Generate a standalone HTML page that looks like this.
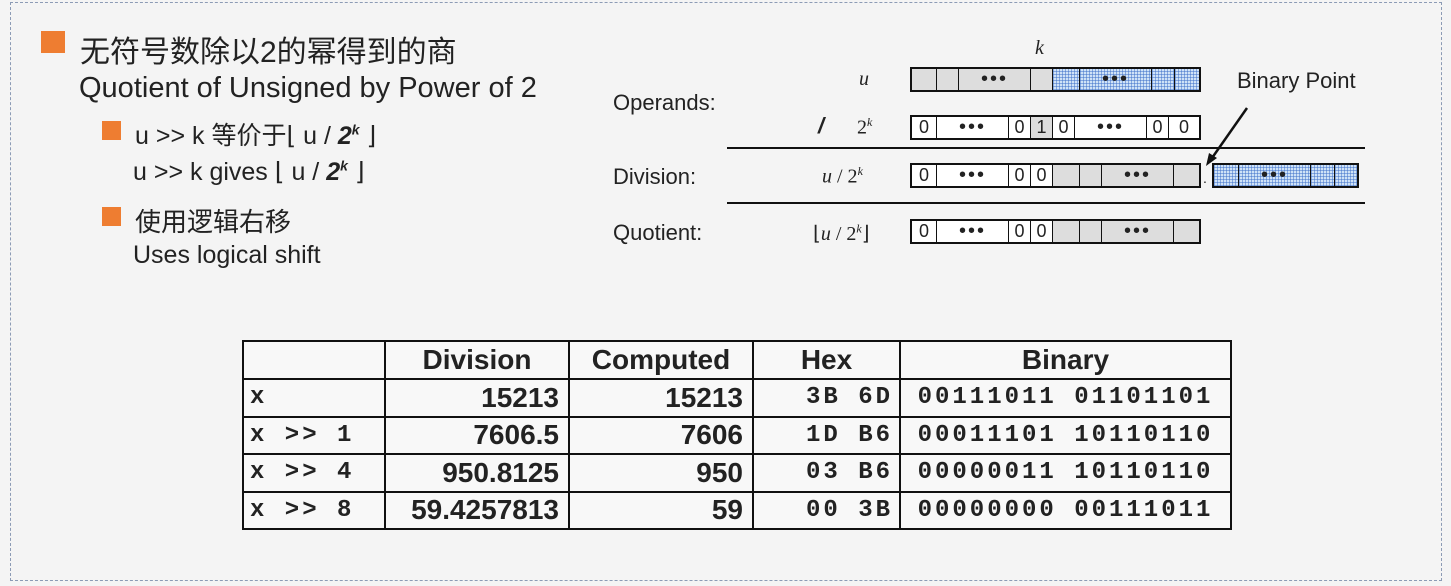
<!DOCTYPE html>
<html><head><meta charset="utf-8"><style>
*{margin:0;padding:0;box-sizing:border-box}
body{width:1451px;height:586px;background:#f4f4f4;position:relative;overflow:hidden;font-family:"Liberation Sans","Noto Sans CJK SC",sans-serif;color:#222}
.frame{position:absolute;left:10px;top:2px;width:1432px;height:579px;border:1.5px dashed #8c9bb5}
.t{position:absolute;white-space:nowrap}
.sq{position:absolute;background:#ee7d31}
.ar{font-family:"Liberation Sans",Arial,sans-serif}
.it{font-family:"Liberation Serif",serif;font-style:italic}
.bar{position:absolute;height:25px;border:2px solid #111;display:flex;background:#ddd}
.bar div{border-right:1.5px solid #111;height:100%;font:18px "Liberation Sans",sans-serif;text-align:center;line-height:21px}
.bar div:last-child{border-right:none}
.w{background:#fff}.g{background:#ddd}
.b{background-color:#cfe2f7;background-image:linear-gradient(90deg,rgba(60,110,200,.5) 1px,transparent 1px),linear-gradient(0deg,rgba(60,110,200,.5) 1px,transparent 1px);background-size:3px 3px}
.dots{font-weight:bold;letter-spacing:2px;font-size:20px!important}
.hl{position:absolute;height:2px;background:#111;left:727px;width:638px}
table{position:absolute;left:242px;top:340px;border-collapse:collapse;font-family:"Liberation Sans",sans-serif;font-weight:bold}
td{border:2.5px solid #111;height:37.5px;background:#f8f8f8;font-size:28px;padding:0 9px;text-align:right;white-space:nowrap}
tr:first-child td{text-align:center;height:38px}
.m{font-family:"Liberation Mono",monospace;font-size:24px;letter-spacing:3px;text-align:left;padding:0 6px}
</style></head><body>
<div class="frame"></div>
<div class="sq" style="left:41px;top:31px;width:24px;height:22px"></div>
<div class="t" style="left:80px;top:27px;font-size:30px">无符号数除以2的幂得到的商</div>
<div class="t" style="left:79px;top:72px;font-size:29px">Quotient of Unsigned by Power of 2</div>
<div class="sq" style="left:102px;top:121px;width:19px;height:19px"></div>
<div class="t" style="left:135px;top:116px;font-size:25px">u &gt;&gt; k 等价于⌊ u / <b><i>2<sup style="font-size:14px">k</sup></i></b> ⌋</div>
<div class="t" style="left:133px;top:157px;font-size:25px">u &gt;&gt; k gives ⌊ u / <b><i>2<sup style="font-size:14px">k</sup></i></b> ⌋</div>
<div class="sq" style="left:102px;top:207px;width:19px;height:19px"></div>
<div class="t" style="left:135px;top:202px;font-size:26px">使用逻辑右移</div>
<div class="t" style="left:133px;top:241px;font-size:25px">Uses logical shift</div>

<div class="t ar" style="left:613px;top:90px;font-size:22px">Operands:</div>
<div class="t ar" style="left:613px;top:164px;font-size:22px">Division:</div>
<div class="t ar" style="left:613px;top:220px;font-size:22px">Quotient:</div>
<div class="t ar" style="left:1237px;top:68px;font-size:22px">Binary Point</div>
<div class="t it" style="left:1035px;top:37px;font-size:20px">k</div>
<div class="t it" style="left:859px;top:68px;font-size:20px">u</div>
<div class="t" style="left:818px;top:113px;font-size:22px;font-weight:bold;font-style:italic">/</div>
<div class="t" style="left:857px;top:115px;font-size:20px;font-family:'Liberation Serif',serif">2<sup style="font-size:12px" class="it">k</sup></div>
<div class="t" style="left:822px;top:164px;font-size:20px;font-family:'Liberation Serif',serif"><i>u</i> / 2<sup style="font-size:12px" class="it">k</sup></div>
<div class="t" style="left:813px;top:221px;font-size:20px;font-family:'Liberation Serif',serif">⌊<i>u</i> / 2<sup style="font-size:12px" class="it">k</sup>⌋</div>
<svg style="position:absolute;left:1200px;top:100px" width="60" height="70"><line x1="47" y1="8" x2="12" y2="58" stroke="#111" stroke-width="2.5"/><polygon points="6,66 9,53 17,58" fill="#111"/></svg>

<div class="bar" style="left:910px;top:67px;width:291px">
<div class="g" style="width:25px"></div><div class="g" style="width:22px"></div><div class="g dots" style="width:72px">•••</div><div class="g" style="width:22px"></div><div class="b" style="width:27px"></div><div class="b dots" style="width:72px">•••</div><div class="b" style="width:23px"></div><div class="b" style="flex:1"></div></div>
<div class="bar" style="left:910px;top:115px;width:291px">
<div class="w" style="width:25px">0</div><div class="w dots" style="width:72px">•••</div><div class="w" style="width:22px">0</div><div class="g" style="width:22px">1</div><div class="w" style="width:22px">0</div><div class="w dots" style="width:72px">•••</div><div class="w" style="width:22px">0</div><div class="w" style="flex:1">0</div></div>
<div class="hl" style="top:147px"></div>
<div class="bar" style="left:910px;top:163px;width:291px">
<div class="w" style="width:25px">0</div><div class="w dots" style="width:72px">•••</div><div class="w" style="width:22px">0</div><div class="w" style="width:22px">0</div><div class="g" style="width:27px"></div><div class="g" style="width:22px"></div><div class="g dots" style="width:72px">•••</div><div class="g" style="flex:1"></div></div>
<div class="t" style="left:1203px;top:170px;font-size:14px">.</div>
<div class="bar" style="left:1212px;top:163px;width:147px">
<div class="b" style="width:25px"></div><div class="b dots" style="width:72px">•••</div><div class="b" style="width:24px"></div><div class="b" style="flex:1"></div></div>
<div class="hl" style="top:202px"></div>
<div class="bar" style="left:910px;top:219px;width:291px">
<div class="w" style="width:25px">0</div><div class="w dots" style="width:72px">•••</div><div class="w" style="width:22px">0</div><div class="w" style="width:22px">0</div><div class="g" style="width:27px"></div><div class="g" style="width:22px"></div><div class="g dots" style="width:72px">•••</div><div class="g" style="flex:1"></div></div>

<table>
<tr><td style="width:142px"></td><td style="width:184px">Division</td><td style="width:184px">Computed</td><td style="width:147px">Hex</td><td style="width:331px">Binary</td></tr>
<tr><td class="m">x</td><td>15213</td><td>15213</td><td class="m" style="text-align:right">3B 6D</td><td class="m" style="text-align:center">00111011 01101101</td></tr>
<tr><td class="m">x &gt;&gt; 1</td><td>7606.5</td><td>7606</td><td class="m" style="text-align:right">1D B6</td><td class="m" style="text-align:center">00011101 10110110</td></tr>
<tr><td class="m">x &gt;&gt; 4</td><td>950.8125</td><td>950</td><td class="m" style="text-align:right">03 B6</td><td class="m" style="text-align:center">00000011 10110110</td></tr>
<tr><td class="m">x &gt;&gt; 8</td><td>59.4257813</td><td>59</td><td class="m" style="text-align:right">00 3B</td><td class="m" style="text-align:center">00000000 00111011</td></tr>
</table>
</body></html>
